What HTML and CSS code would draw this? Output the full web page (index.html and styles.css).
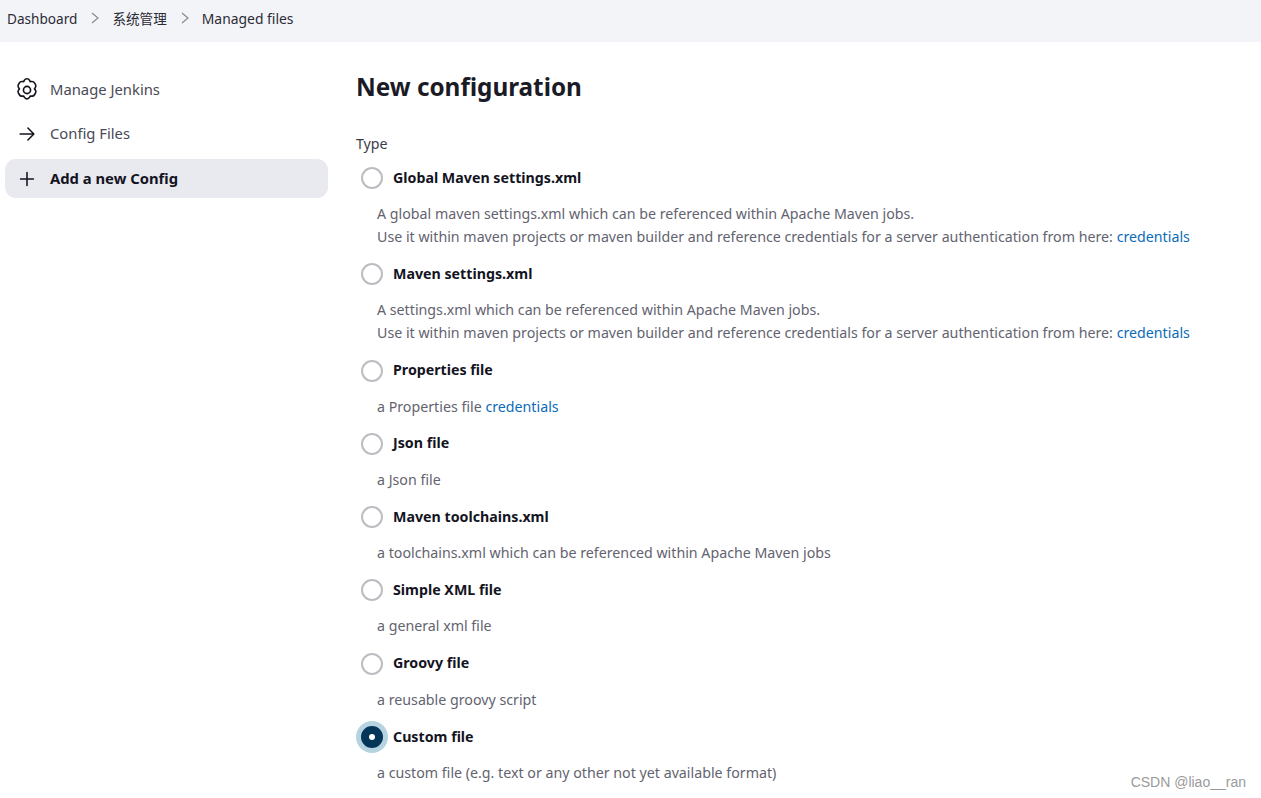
FILE: index.html
```html
<!DOCTYPE html>
<html lang="en">
<head>
    <meta charset="UTF-8">
    <title>New configuration</title>
    <link rel="stylesheet" href="styles.css">
</head>
<body>
    <div class="breadcrumbs">
        <a href="#">Dashboard</a>
        <svg class="chevron" viewBox="0 0 10 12"><path d="M2 1l6 5-6 5"/></svg>
        <a href="#">系统管理</a>
        <svg class="chevron" viewBox="0 0 10 12"><path d="M2 1l6 5-6 5"/></svg>
        <a class="current" href="#">Managed files</a>
    </div>

    <div class="page">
        <div class="side-panel">
            <a class="task" href="#">
                <svg class="task-icon gear" viewBox="2.7 2.7 18.6 18.6">
                    <path d="M12 2.5c1 0 1.7.5 2.2 1.4l.5 1 1.2-.1c1-.1 1.9.3 2.4 1.2l.9 1.5c.5.9.4 1.8-.2 2.6l-.7.9.7.9c.6.8.7 1.7.2 2.6l-.9 1.5c-.5.9-1.4 1.3-2.4 1.2l-1.2-.1-.5 1c-.5.9-1.2 1.4-2.2 1.4h-.1c-1 0-1.7-.5-2.2-1.4l-.5-1-1.2.1c-1 .1-1.9-.3-2.4-1.2l-.9-1.5c-.5-.9-.4-1.8.2-2.6l.7-.9-.7-.9c-.6-.8-.7-1.7-.2-2.6l.9-1.5c.5-.9 1.4-1.3 2.4-1.2l1.2.1.5-1c.5-.9 1.2-1.4 2.2-1.4z"/>
                    <circle cx="12" cy="12" r="3"/>
                </svg>
                <span class="task-text">Manage Jenkins</span>
            </a>
            <a class="task" href="#">
                <svg class="task-icon" viewBox="0 0 24 24"><path d="M4.5 12h15M13 5.5l6.5 6.5-6.5 6.5"/></svg>
                <span class="task-text">Config Files</span>
            </a>
            <a class="task active" href="#">
                <svg class="task-icon" viewBox="0 0 24 24"><path d="M12 5v14M5 12h14"/></svg>
                <span class="task-text">Add a new Config</span>
            </a>
        </div>

        <div class="main-panel">
            <h1>New configuration</h1>
            <div class="field-label">Type</div>
            <form>
                <div class="option">
                    <label class="radio"><input type="radio" name="type"><span class="dot"></span>Global Maven settings.xml</label>
                    <div class="desc">A global maven settings.xml which can be referenced within Apache Maven jobs.<br>Use it within maven projects or maven builder and reference credentials for a server authentication from here: <a href="#">credentials</a></div>
                </div>
                <div class="option">
                    <label class="radio"><input type="radio" name="type"><span class="dot"></span>Maven settings.xml</label>
                    <div class="desc">A settings.xml which can be referenced within Apache Maven jobs.<br>Use it within maven projects or maven builder and reference credentials for a server authentication from here: <a href="#">credentials</a></div>
                </div>
                <div class="option">
                    <label class="radio"><input type="radio" name="type"><span class="dot"></span>Properties file</label>
                    <div class="desc">a Properties file <a href="#">credentials</a></div>
                </div>
                <div class="option">
                    <label class="radio"><input type="radio" name="type"><span class="dot"></span>Json file</label>
                    <div class="desc">a Json file</div>
                </div>
                <div class="option">
                    <label class="radio"><input type="radio" name="type"><span class="dot"></span>Maven toolchains.xml</label>
                    <div class="desc">a toolchains.xml which can be referenced within Apache Maven jobs</div>
                </div>
                <div class="option">
                    <label class="radio"><input type="radio" name="type"><span class="dot"></span>Simple XML file</label>
                    <div class="desc">a general xml file</div>
                </div>
                <div class="option">
                    <label class="radio"><input type="radio" name="type"><span class="dot"></span>Groovy file</label>
                    <div class="desc">a reusable groovy script</div>
                </div>
                <div class="option">
                    <label class="radio"><input type="radio" name="type" checked><span class="dot"></span>Custom file</label>
                    <div class="desc">a custom file (e.g. text or any other not yet available format)</div>
                </div>
            </form>
        </div>
    </div>

    <div class="watermark">CSDN @liao__ran</div>
</body>
</html>
```

FILE: styles.css
```css
html, body {
    height: 798px;
    overflow: hidden;
}
body {
    margin: 0;
    position: relative;
    font-family: "Noto Sans", "Noto Sans CJK SC", sans-serif;
    font-size: 14.22px;
    color: #14141f;
    background-color: #fff;
}
a {
    text-decoration: none;
}
.breadcrumbs {
    display: flex;
    align-items: center;
    height: 36px;
    padding: 0 0 6px 7px;
    font-size: 13.6px;
    background-color: #f3f4f8;
}
.breadcrumbs a {
    color: #2b2b36;
}
.breadcrumbs .current {
    font-size: 13.9px;
}
.chevron {
    width: 10px;
    height: 12px;
    margin: 0 12px 0 13px;
    fill: none;
    stroke: #8a8a94;
    stroke-width: 1.2;
}
.page {
    display: flex;
}
.side-panel {
    width: 323px;
    margin-left: 5px;
    padding-top: 28px;
    flex-shrink: 0;
    font-size: 14.8px;
}
.task {
    display: flex;
    align-items: center;
    height: 39px;
    margin-bottom: 5px;
    padding-left: 11px;
    border-radius: 11px;
    color: #4a4a55;
}
.task.active {
    margin-top: 6px;
    background-color: #e9e9f0;
    color: #14141f;
    font-weight: bold;
}
.task-text {
    margin-bottom: 2px;
}
.task-icon {
    width: 22px;
    height: 22px;
    margin-right: 12px;
    fill: none;
    stroke: #14141f;
    stroke-width: 1.7;
    stroke-linecap: round;
    stroke-linejoin: round;
    overflow: visible;
}
.gear {
    stroke-width: 1.4;
}
.main-panel {
    margin-left: 28px;
    flex: 1;
    white-space: nowrap;
}
h1 {
    margin: 28px 0 0;
    font-size: 24.3px;
    line-height: 34px;
    font-weight: bold;
    color: #1b1b26;
}
.field-label {
    margin-top: 29px;
    line-height: 22px;
    color: #3c3c48;
}
form {
    margin-top: 11px;
}
.option {
    padding-bottom: 14.3px;
}
.radio {
    display: flex;
    align-items: center;
    height: 22px;
    padding-left: 5px;
    font-weight: bold;
}
.radio input {
    display: none;
}
.dot {
    width: 18px;
    height: 18px;
    margin: 2px 10px 0 0;
    border: 2px solid #bcbcc2;
    border-radius: 50%;
    background-color: #fff;
}
.radio input:checked + .dot {
    width: 6px;
    height: 6px;
    border: 8px solid #04365a;
    box-shadow: 0 0 0 5px #b5d3e0;
}
.desc {
    margin: 14px 0 0 21px;
    line-height: 23px;
    color: #63636f;
}
.desc a {
    color: #0b6bb8;
}
.watermark {
    position: absolute;
    right: 15px;
    bottom: 8px;
    font-family: "Liberation Sans", sans-serif;
    font-size: 14px;
    color: #9a9a9a;
}
```
